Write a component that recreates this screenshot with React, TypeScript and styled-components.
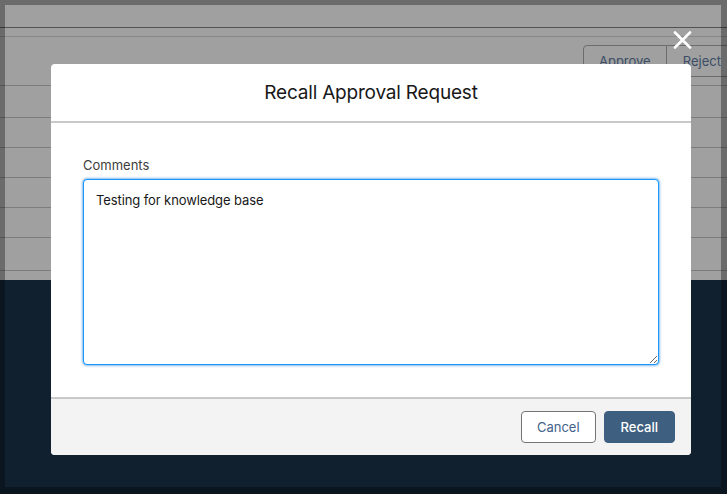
import styled, { createGlobalStyle } from "styled-components"

const GlobalStyle = createGlobalStyle`
  html, body {
    margin: 0;
    padding: 0;
  }
  body {
    font-family: Inter, "Noto Sans", "Liberation Sans", sans-serif;
    -webkit-font-smoothing: antialiased;
  }
`

const Screen = styled.div`
  position: relative;
  width: 727px;
  height: 494px;
  overflow: hidden;
  background: #a0a0a0;
  display: flex;
  flex-direction: column;
`

const Rule = styled.div<{ $h: number; $line: string }>`
  height: ${(p) => p.$h}px;
  border-bottom: 1px solid ${(p) => p.$line};
  flex-shrink: 0;
`

const Toolbar = styled.div`
  height: 49px;
  border-bottom: 1px solid #7c7c7c;
  display: flex;
  justify-content: flex-end;
  align-items: flex-start;
  padding-top: 8px;
  box-sizing: border-box;
  flex-shrink: 0;
`

const ButtonGroup = styled.div`
  display: flex;
  margin-right: -11px;
`

const GhostButton = styled.div<{ $first?: boolean }>`
  height: 32px;
  box-sizing: border-box;
  padding: 0 16px;
  display: flex;
  align-items: center;
  justify-content: center;
  font-size: 13px;
  color: #3b4e66;
  border: 1px solid #6c6c6c;
  border-left-width: ${(p) => (p.$first ? "1px" : "0")};
  border-radius: ${(p) => (p.$first ? "4px 0 0 4px" : "0")};
  width: ${(p) => (p.$first ? "84px" : "auto")};
`

const DarkBand = styled.div`
  flex: 1;
  background: #10202f;
`

const Frame = styled.div`
  position: absolute;
  inset: 0;
  box-sizing: border-box;
  border-style: solid;
  border-color: rgba(0, 0, 0, 0.33);
  border-width: 5px 6px 7px 5px;
  pointer-events: none;
`

const CloseButton = styled.div`
  position: absolute;
  left: 673px;
  top: 31px;
  width: 19px;
  height: 18px;
  display: flex;
  align-items: center;
  justify-content: center;
`

const Modal = styled.div`
  position: absolute;
  left: 51px;
  top: 64px;
  width: 640px;
  background: #fff;
  border-radius: 4px;
  overflow: hidden;
  display: flex;
  flex-direction: column;
`

const Header = styled.div`
  height: 59px;
  box-sizing: border-box;
  border-bottom: 2px solid #c9c9c9;
  display: flex;
  align-items: center;
  justify-content: center;
`

const Title = styled.h2`
  margin: 0;
  font-size: 19px;
  font-weight: 400;
  color: #181818;
  letter-spacing: -0.2px;
`

const Body = styled.div`
  padding: 33px 32px 32px;
  display: flex;
  flex-direction: column;
`

const Label = styled.label`
  font-size: 13px;
  line-height: 18px;
  color: #3e3e3c;
  margin-bottom: 5px;
`

const TextArea = styled.textarea`
  height: 186px;
  box-sizing: border-box;
  padding: 11px 12px;
  border: 1px solid #1b96ff;
  border-radius: 4px;
  box-shadow: 0 0 3px #0176d3;
  font-family: inherit;
  font-size: 13px;
  line-height: 18px;
  letter-spacing: -0.1px;
  color: #181818;
  resize: vertical;
  outline: none;
`

const Footer = styled.div`
  border-top: 2px solid #c9c9c9;
  background: #f3f3f3;
  padding: 12px 16px;
  display: flex;
  justify-content: flex-end;
  gap: 8px;
`

const Button = styled.button<{ $brand?: boolean }>`
  height: 32px;
  padding: 0 ${(p) => (p.$brand ? 16 : 15)}px;
  border-radius: 4px;
  font-family: inherit;
  font-size: 13px;
  font-weight: ${(p) => (p.$brand ? 500 : 400)};
  border: 1px solid ${(p) => (p.$brand ? "#3f5f80" : "#747474")};
  background: ${(p) => (p.$brand ? "#3f5f80" : "#fff")};
  color: ${(p) => (p.$brand ? "#fff" : "#42628a")};
  cursor: pointer;
`

const App = () => {
  return (
    <>
      <GlobalStyle />
      <Screen>
        <Rule $h={27} $line="#525252" />
        <Rule $h={8} $line="#878787" />
        <Toolbar>
          <ButtonGroup>
            <GhostButton $first>Approve</GhostButton>
            <GhostButton>Reject</GhostButton>
          </ButtonGroup>
        </Toolbar>
        <Rule $h={31} $line="#7c7c7c" />
        <Rule $h={29} $line="#7c7c7c" />
        <Rule $h={29} $line="#7c7c7c" />
        <Rule $h={29} $line="#7c7c7c" />
        <Rule $h={29} $line="#7c7c7c" />
        <Rule $h={32} $line="#7c7c7c" />
        <Rule $h={8} $line="transparent" />
        <DarkBand />

        <CloseButton>
          <svg width="19" height="18" viewBox="0 0 19 18">
            <path d="M2 1.5 L17 16.5 M17 1.5 L2 16.5" stroke="#fff" strokeWidth="2.6" strokeLinecap="round" />
          </svg>
        </CloseButton>

        <Modal>
          <Header>
            <Title>Recall Approval Request</Title>
          </Header>
          <Body>
            <Label>Comments</Label>
            <TextArea defaultValue="Testing for knowledge base" />
          </Body>
          <Footer>
            <Button>Cancel</Button>
            <Button $brand>Recall</Button>
          </Footer>
        </Modal>

        <Frame />
      </Screen>
    </>
  )
}

export default App
